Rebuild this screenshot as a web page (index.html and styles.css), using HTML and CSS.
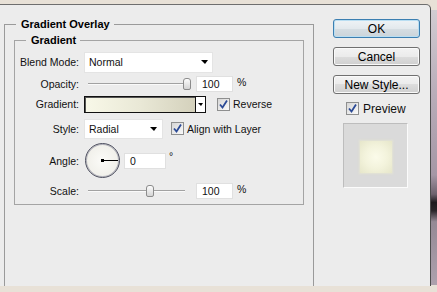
FILE: index.html
```html
<!DOCTYPE html>
<html lang="en">
<head>
  <meta charset="UTF-8">
  <title>Layer Style - Gradient Overlay</title>
  <link rel="stylesheet" href="styles.css">
</head>
<body>

<div class="screen">
  <div class="dialog">
    <fieldset class="group outer">
      <legend>Gradient Overlay</legend>

      <fieldset class="group inner">
        <legend>Gradient</legend>

        <div class="form">
          <label class="lbl">Blend Mode:</label>
          <div class="ctl">
            <div class="select blend"><span>Normal</span><i class="caret"></i></div>
          </div>

          <label class="lbl">Opacity:</label>
          <div class="ctl">
            <div class="slider"><span class="thumb" style="left: 99px"></span></div>
            <div class="num">100</div>
            <span class="unit">%</span>
          </div>

          <label class="lbl">Gradient:</label>
          <div class="ctl">
            <div class="grad">
              <div class="grad-fill"></div>
              <div class="grad-drop"><i class="caret small"></i></div>
            </div>
            <span class="check reverse">
              <svg width="11" height="11" viewBox="0 0 11 11"><path d="M2 5.5 L4.5 8.5 L9 1.5" fill="none" stroke="#2b4a96" stroke-width="1.8"/></svg>
            </span>
            <span class="check-text">Reverse</span>
          </div>

          <label class="lbl">Style:</label>
          <div class="ctl">
            <div class="select style"><span>Radial</span><i class="caret"></i></div>
            <span class="check align">
              <svg width="11" height="11" viewBox="0 0 11 11"><path d="M2 5.5 L4.5 8.5 L9 1.5" fill="none" stroke="#2b4a96" stroke-width="1.8"/></svg>
            </span>
            <span class="check-text">Align with Layer</span>
          </div>

          <label class="lbl">Angle:</label>
          <div class="ctl">
            <div class="dial"></div>
            <div class="num angle">0</div>
            <span class="deg">°</span>
          </div>

          <label class="lbl">Scale:</label>
          <div class="ctl">
            <div class="slider"><span class="thumb" style="left: 62px"></span></div>
            <div class="num">100</div>
            <span class="unit">%</span>
          </div>
        </div>
      </fieldset>
    </fieldset>

    <div class="actions">
      <button class="btn default">OK</button>
      <button class="btn">Cancel</button>
      <button class="btn">New Style...</button>

      <div class="preview-toggle">
        <span class="check">
          <svg width="11" height="11" viewBox="0 0 11 11"><path d="M2 5.5 L4.5 8.5 L9 1.5" fill="none" stroke="#2b4a96" stroke-width="1.8"/></svg>
        </span>
        <span class="preview-text">Preview</span>
      </div>

      <div class="swatch">
        <div class="swatch-fill"></div>
      </div>
    </div>
  </div>

  <div class="backdrop"></div>
</div>

</body>
</html>
```

FILE: styles.css
```css
body {
  margin: 0;
  width: 437px;
  height: 292px;
  overflow: hidden;
  background: #e8e1d7;
  font-family: "Liberation Sans", Arial, sans-serif;
  color: #111;
}
.screen {
  display: flex;
  align-items: flex-start;
  height: 292px;
}
.dialog {
  box-sizing: border-box;
  width: 431px;
  height: 282px;
  margin-top: 4px;
  display: flex;
  align-items: flex-start;
  background: #ececec;
  border-top: 1px solid #6e6e6e;
  border-right: 1px solid #4c4c4c;
  border-top-right-radius: 5px;
  overflow: hidden;
}
.backdrop {
  flex: 1;
  margin-top: 10px;
  height: 275px;
  background: linear-gradient(to bottom, #d2ccd2 0%, #b9adb9 30%, #a597a5 60%, #6d626d 67%, #1e1b1e 70%, #2a262a 73%, #958995 77%, #ada1ad 100%);
}

/* group boxes */
.group {
  margin: 0;
  border: 1px solid #a4a4a4;
  min-width: 0;
}
.group legend {
  font-size: 11px;
  font-weight: bold;
  line-height: 12px;
  color: #000;
  padding: 0 4px 0 5px;
}
.outer {
  box-sizing: border-box;
  width: 310px;
  height: 320px;
  margin: 13px 0 0 4px;
  padding: 4px 9px 0 9px;
  border-color: #9a9a9a;
}
.outer > legend {
  margin-left: 2px;
}
.inner {
  padding: 5px 0 1px 0;
}
.inner > legend {
  margin-left: 11px;
}

/* form rows */
.form {
  display: grid;
  grid-template-columns: 64px auto;
  grid-template-rows: 22px 21px 20px 29px 35px 25px;
  column-gap: 5px;
  align-items: center;
  font-size: 10.5px;
}
.lbl {
  text-align: right;
  color: #111;
}
.ctl {
  display: flex;
  align-items: center;
}

.select {
  box-sizing: border-box;
  display: flex;
  align-items: center;
  justify-content: space-between;
  background: #fff;
  border: 1px solid #e4e4e4;
  padding: 0 4px;
}
.select.blend {
  width: 129px;
  height: 21px;
}
.select.style {
  width: 79px;
  height: 20px;
  padding-right: 5px;
}
.caret {
  width: 0;
  height: 0;
  border-left: 4px solid transparent;
  border-right: 3px solid transparent;
  border-top: 4px solid #000;
}
.caret.small {
  border-left-width: 3px;
  border-right-width: 2px;
  border-top-width: 3px;
}

.slider {
  position: relative;
  width: 108px;
  height: 14px;
}
.slider::before {
  content: "";
  position: absolute;
  left: 4px;
  right: 7px;
  top: 6px;
  border-top: 1px solid #a2a2a2;
  border-bottom: 1px solid #fafafa;
}
.thumb {
  position: absolute;
  top: 1px;
  box-sizing: border-box;
  width: 8px;
  height: 12px;
  border: 1px solid #8c8c8c;
  border-radius: 3px 3px 2px 2px;
  background: linear-gradient(#fdfdfd, #d4d4d4);
}

.num {
  box-sizing: border-box;
  width: 37px;
  height: 16px;
  margin-left: 4px;
  padding-left: 5px;
  line-height: 14px;
  background: #fff;
  border: 1px solid #e0e0e0;
}
.num.angle {
  width: 42px;
  margin-left: 4px;
}
.unit {
  margin-left: 4px;
  margin-bottom: 3px;
}
.deg {
  align-self: flex-start;
  margin: 8px 0 0 3px;
  line-height: 10px;
}

.grad {
  box-sizing: border-box;
  display: flex;
  width: 122px;
  height: 17px;
  border: 1px solid #111;
  box-shadow: inset 1px 1px 0 #555;
}
.grad-fill {
  flex: 1;
  margin: 1px 0 0 1px;
  background: linear-gradient(90deg, #f8f8e8, #e9e8d6 50%, #d4d1bc);
}
.grad-drop {
  width: 9px;
  display: flex;
  align-items: center;
  justify-content: center;
  background: #fff;
  border-left: 1px solid #111;
}

.check {
  box-sizing: border-box;
  display: inline-flex;
  align-items: center;
  justify-content: center;
  width: 13px;
  height: 13px;
  border: 1px solid #8e8f8f;
  background: linear-gradient(135deg, #d6d6d6, #fafafa);
}
.check.reverse {
  margin-left: 11px;
}
.check.align {
  margin-left: 8px;
}
.check-text {
  margin-left: 3px;
}

.dial {
  box-sizing: border-box;
  position: relative;
  width: 35px;
  height: 35px;
  margin-left: 1px;
  border-radius: 50%;
  border: 1px solid #4e5060;
  box-shadow: inset 0 0 0 1px #b4b4bc;
  background: radial-gradient(circle, #fbfbf8, #ecebe4);
}
.dial::before {
  content: "";
  position: absolute;
  left: 15px;
  top: 15px;
  width: 3px;
  height: 3px;
  background: #000;
}
.dial::after {
  content: "";
  position: absolute;
  left: 16px;
  top: 16px;
  width: 16px;
  height: 1px;
  background: #000;
}

/* right column */
.actions {
  display: flex;
  flex-direction: column;
  width: 87px;
  margin-left: 19px;
  padding-top: 14px;
}
.btn {
  box-sizing: border-box;
  height: 19px;
  margin-bottom: 9px;
  padding: 0;
  font-family: "Liberation Sans", Arial, sans-serif;
  font-size: 12px;
  color: #000;
  border: 1px solid #707070;
  border-radius: 3px;
  background: linear-gradient(#f3f3f3, #ebebeb 50%, #dddddd 50%, #cfcfcf);
  box-shadow: inset 0 0 0 1px #fafafa;
}
.btn.default {
  border-color: #3c7fb1;
  background: linear-gradient(#eef3f6, #e3e9ed 50%, #d6dee3 50%, #cbd4da);
  box-shadow: inset 0 0 0 1px #b9def2;
}
.preview-toggle {
  display: flex;
  align-items: center;
  margin: -1px 0 0 13px;
  height: 13px;
}
.preview-text {
  margin-left: 4px;
  font-size: 12px;
  color: #111;
}
.swatch {
  box-sizing: border-box;
  display: flex;
  align-items: center;
  justify-content: center;
  width: 65px;
  height: 65px;
  margin: 8px 0 0 10px;
  background: #dadada;
  border: 1px solid;
  border-color: #bdbdbd #fbfbfb #fbfbfb #bdbdbd;
}
.swatch-fill {
  width: 32px;
  height: 32px;
  margin-top: 3px;
  background: radial-gradient(circle, #fbfbea 0%, #f3f3dc 50%, #e6e6ca 100%);
  box-shadow: 0 0 2px 1px rgba(232, 232, 206, 0.7);
}
```
